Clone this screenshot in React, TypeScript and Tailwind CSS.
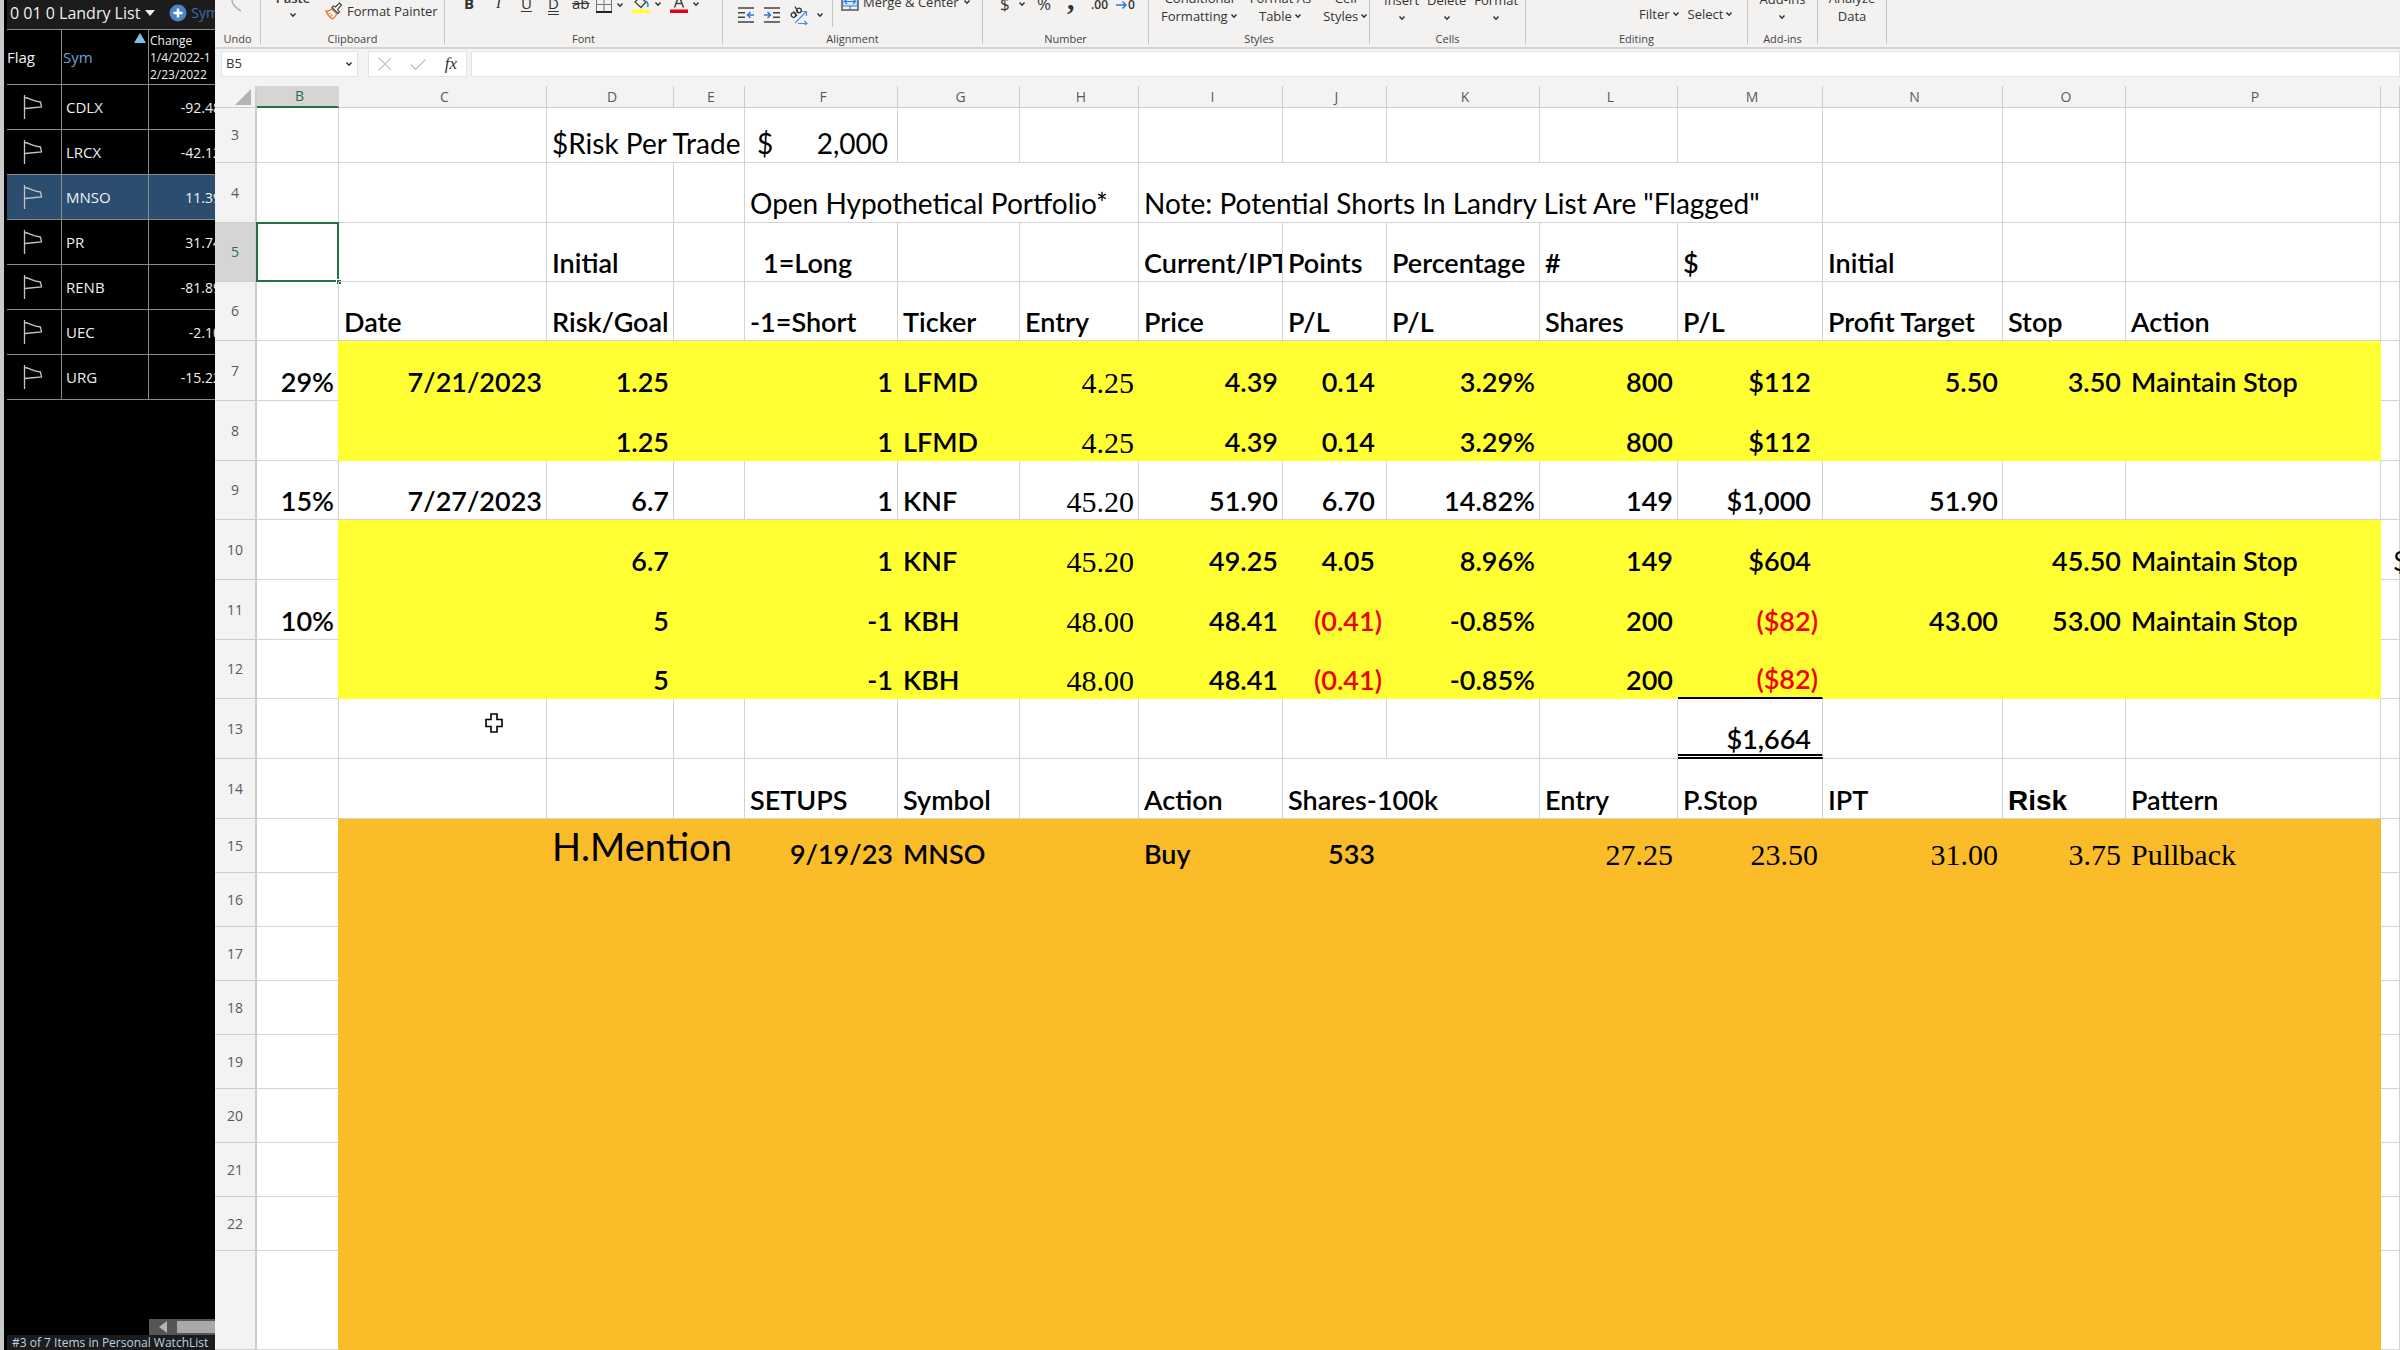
import React from 'react';

type Cell = {
    text: string;
    align?: 'left' | 'right';
    span?: number;
    style?: string;
};

type SheetRow = {
    n: string;
    height: string;
    fill?: 'yellow' | 'orange';
    cells: Record<string, Cell>;
};

const COLUMNS = [
    { id: 'B', width: 'w-[82px]' },
    { id: 'C', width: 'w-[208px]' },
    { id: 'D', width: 'w-[127px]' },
    { id: 'E', width: 'w-[71px]' },
    { id: 'F', width: 'w-[153px]' },
    { id: 'G', width: 'w-[122px]' },
    { id: 'H', width: 'w-[119px]' },
    { id: 'I', width: 'w-[144px]' },
    { id: 'J', width: 'w-[104px]' },
    { id: 'K', width: 'w-[153px]' },
    { id: 'L', width: 'w-[138px]' },
    { id: 'M', width: 'w-[145px]' },
    { id: 'N', width: 'w-[180px]' },
    { id: 'O', width: 'w-[123px]' },
    { id: 'P', width: 'w-[255px]' },
    { id: 'Q', width: '' },
];

const SERIF = "font-['Liberation_Serif',serif] text-[30px] leading-[32px] font-normal";
const PLAIN = 'font-normal text-[28px] leading-[36px]';
const RED = 'text-[#f00000]';

const l = (text: string, style = '', span = 1): Cell => ({ text, style, span, align: 'left' });
const r = (text: string, style = ''): Cell => ({ text, style, align: 'right' });
// accounting formats keep room for a closing bracket
const acc = (text: string): Cell => r(text, 'pr-[11px]');

const ROWS: SheetRow[] = [
    { n: '3', height: 'h-[55px]', cells: { D: l('$Risk Per Trade', PLAIN, 2), F: l('$ 2,000', PLAIN) } },
    {
        n: '4', height: 'h-[60px]', cells: {
            F: l('Open Hypothetical Portfolio*', PLAIN, 3),
            I: l('Note: Potential Shorts In Landry List Are "Flagged"', PLAIN, 5),
        },
    },
    {
        n: '5', height: 'h-[59px]', cells: {
            D: l('Initial'), F: l('1=Long', 'pl-[18px]'), I: l('Current/IPT'), J: l('Points'),
            K: l('Percentage'), L: l('#'), M: l('$'), N: l('Initial'),
        },
    },
    {
        n: '6', height: 'h-[59px]', cells: {
            C: l('Date'), D: l('Risk/Goal'), F: l('-1=Short'), G: l('Ticker'), H: l('Entry'), I: l('Price'),
            J: l('P/L'), K: l('P/L'), L: l('Shares'), M: l('P/L'), N: l('Profit Target'), O: l('Stop'), P: l('Action'),
        },
    },
    {
        n: '7', height: 'h-[60px]', fill: 'yellow', cells: {
            B: r('29%'), C: r('7/21/2023'), D: r('1.25'), F: r('1'), G: l('LFMD'), H: r('4.25', SERIF), I: r('4.39'),
            J: acc('0.14'), K: r('3.29%'), L: r('800'), M: acc('$112'), N: r('5.50'), O: r('3.50'), P: l('Maintain Stop'),
        },
    },
    {
        n: '8', height: 'h-[60px]', fill: 'yellow', cells: {
            D: r('1.25'), F: r('1'), G: l('LFMD'), H: r('4.25', SERIF), I: r('4.39'),
            J: acc('0.14'), K: r('3.29%'), L: r('800'), M: acc('$112'),
        },
    },
    {
        n: '9', height: 'h-[59px]', cells: {
            B: r('15%'), C: r('7/27/2023'), D: r('6.7'), F: r('1'), G: l('KNF'), H: r('45.20', SERIF), I: r('51.90'),
            J: acc('6.70'), K: r('14.82%'), L: r('149'), M: acc('$1,000'), N: r('51.90'),
        },
    },
    {
        n: '10', height: 'h-[60px]', fill: 'yellow', cells: {
            D: r('6.7'), F: r('1'), G: l('KNF'), H: r('45.20', SERIF), I: r('49.25'), J: acc('4.05'), K: r('8.96%'),
            L: r('149'), M: acc('$604'), O: r('45.50'), P: l('Maintain Stop'), Q: l('$', 'font-normal pl-3'),
        },
    },
    {
        n: '11', height: 'h-[60px]', fill: 'yellow', cells: {
            B: r('10%'), D: r('5'), F: r('-1'), G: l('KBH'), H: r('48.00', SERIF), I: r('48.41'), J: r('(0.41)', RED),
            K: r('-0.85%'), L: r('200'), M: r('($82)', RED), N: r('43.00'), O: r('53.00'), P: l('Maintain Stop'),
        },
    },
    {
        n: '12', height: 'h-[59px]', fill: 'yellow', cells: {
            D: r('5'), F: r('-1'), G: l('KBH'), H: r('48.00', SERIF), I: r('48.41'), J: r('(0.41)', RED),
            K: r('-0.85%'), L: r('200'), M: r('($82)', RED),
        },
    },
    { n: '13', height: 'h-[60px]', cells: { M: r('$1,664', 'pr-[11px] leading-[30px]') } },
    {
        n: '14', height: 'h-[60px]', cells: {
            F: l('SETUPS'), G: l('Symbol'), I: l('Action'), J: l('Shares-100k', '', 2), L: l('Entry'), M: l('P.Stop'),
            N: l('IPT'), O: l('Risk', "font-['Liberation_Sans',sans-serif] text-[28px] leading-[32px]"), P: l('Pattern'),
        },
    },
    {
        n: '15', height: 'h-[54px]', fill: 'orange', cells: {
            D: l('H.Mention', 'font-normal text-[38px] leading-[50px]', 2), F: r('9/19/23'), G: l('MNSO'), I: l('Buy'),
            J: acc('533'), L: r('27.25', SERIF), M: r('23.50', SERIF), N: r('31.00', SERIF), O: r('3.75', SERIF),
            P: l('Pullback', SERIF),
        },
    },
    ...['16', '17', '18', '19', '20', '21', '22'].map(
        (n): SheetRow => ({ n, height: 'h-[54px]', fill: 'orange', cells: {} }),
    ),
    { n: '', height: '', fill: 'orange', cells: {} },
];

const WATCHLIST = [
    { sym: 'CDLX', change: '-92.48' },
    { sym: 'LRCX', change: '-42.12' },
    { sym: 'MNSO', change: '11.39' },
    { sym: 'PR', change: '31.74' },
    { sym: 'RENB', change: '-81.89' },
    { sym: 'UEC', change: '-2.10' },
    { sym: 'URG', change: '-15.22' },
];

/* ---------- icons ---------- */

const Chevron = ({ className = '' }: { className?: string }) => (
    <svg className={`h-2 w-2 shrink-0 ${className}`} viewBox="0 0 8 8" fill="none" stroke="#333" strokeWidth="1.5"><path d="M1.5 2.5 4 5.2 6.5 2.5" /></svg>
);

const FlagIcon = () => (
    <svg className="ml-4 h-6 w-5" viewBox="0 0 20 24" fill="none" stroke="#c4c4c4" strokeWidth="1.3"><path d="M1.5 0V24M1.5 2.500C7 3 9 6 17.500 7L18.500 12 2 13.500" /></svg>
);

const BrushIcon = () => (
    <svg className="h-[18px] w-[18px]" viewBox="0 0 18 18" fill="none">
        <path d="M1 9c2 .6 4-.4 5.500-2l5.500 5c-1.500 1.500-2.500 3.500-4.500 5C5 15.500 2.500 13 1 9Z" fill="#fff" stroke="#e07b39" strokeWidth="1.400" />
        <path d="m3.500 12 2-1M5.500 14.500l2-2" stroke="#e07b39" strokeWidth="1.200" />
        <path d="m7 5.500 6 6 1.500-1.500-2-2.500 4-4.500L14.500 1l-4 4L8.500 4Z" fill="#fff" stroke="#444" strokeWidth="1.200" />
    </svg>
);

const BordersIcon = () => (
    <svg className="h-4 w-4" viewBox="0 0 16 16" fill="none" stroke="#777"><path d="M.5 0V15M15.500 0V15M8 0V15M0 7.500H16" /><path d="M0 15H16" stroke="#222" strokeWidth="2" /></svg>
);

const BucketIcon = () => (
    <svg className="h-[18px] w-[18px]" viewBox="0 0 18 18" fill="none"><path d="M3 7 8 2l6 5-5 5.500L3 7Z" stroke="#444" strokeWidth="1.300" /><path d="M14 6c2 2 2.500 4 1.500 6" stroke="#2b7cd3" strokeWidth="1.500" /><path d="M0 14.500H18V18H0Z" fill="#ffff2e" /></svg>
);

const FontColorIcon = () => (
    <svg className="h-[18px] w-[18px]" viewBox="0 0 18 18" fill="none"><path d="m4.500 12.500 4.500-12 4.500 12M6 8.500h6" stroke="#444" strokeWidth="1.500" /><path d="M0 14.500H18V18H0Z" fill="#e3001b" /></svg>
);

const IndentIcon = ({ right = false }: { right?: boolean }) => (
    <svg className="h-4 w-4" viewBox="0 0 16 16" fill="none">
        <path d="M0 1H16M0 15H16" stroke="#444" strokeWidth="1.400" />
        {right
            ? <><path d="M9 5.700H16M9 10.300H16" stroke="#444" strokeWidth="1.400" /><path d="M0 8H6M3.500 5 6.500 8 3.500 11" stroke="#2b7cd3" strokeWidth="1.500" /></>
            : <><path d="M0 5.700H7M0 10.300H7" stroke="#444" strokeWidth="1.400" /><path d="M16 8H10M12.500 5 9.500 8 12.500 11" stroke="#2b7cd3" strokeWidth="1.500" /></>}
    </svg>
);

const OrientationIcon = () => (
    <svg className="h-5 w-[18px]" viewBox="0 0 18 20" fill="none">
        <circle cx="3.500" cy="10" r="2.300" stroke="#333" strokeWidth="1.300" /><path d="M3.500 6.500 7 11" stroke="#333" strokeWidth="1.300" />
        <circle cx="9" cy="5.500" r="2.300" stroke="#333" strokeWidth="1.300" /><path d="M5 1.500 8 7" stroke="#333" strokeWidth="1.300" />
        <path d="M5 18 16 7M12 6.500H16.500V11M8 18.500H17M14.500 16 17 18.500 14.500 20" stroke="#4a90d9" strokeWidth="1.200" />
    </svg>
);

const MergeIcon = () => (
    <svg className="h-[18px] w-[18px]" viewBox="0 0 18 18" fill="none"><path d="M1 0V17H17V0" stroke="#555" strokeWidth="1.500" /><path d="M1.700 4H16.300V13H1.700Z" fill="#d5e8f8" stroke="#2b7cd3" /><path d="M4 8.500H14M6 6 3.500 8.500 6 11M12 6l2.500 2.500L12 11M9 13v4" stroke="#2b7cd3" strokeWidth="1.200" /></svg>
);

/* ---------- ribbon ---------- */

const Group = ({ label, width, children }: { label: string; width: string; children: React.ReactNode }) => (
    <section className={`flex h-[44px] shrink-0 flex-col border-r border-[#c8c6c4] ${width}`}>
        <div className="flex h-[31px] shrink-0 items-end">{children}</div>
        <h2 className="text-center text-[11px] leading-4 text-[#444]">{label}</h2>
    </section>
);

const StackButton = ({ top, bottom }: { top: string; bottom?: string }) => (
    <button className="flex shrink-0 flex-col items-center leading-[18px]">
        <span>{top}</span>
        <span className="flex h-[18px] items-center gap-0.5">{bottom}<Chevron /></span>
    </button>
);

const Ribbon = () => (
    <div className="flex h-[49px] shrink-0 overflow-hidden border-b-2 border-[#d6d4d3] bg-[#f3f2f1] text-[12px] text-[#333]">
        <Group label="Undo" width="w-[46px]">
            <button aria-label="Undo" className="mb-[19px] ml-4"><svg className="h-4 w-3" viewBox="0 0 12 16" fill="none" stroke="#b0b0b0" strokeWidth="1.500"><path d="M1 4c0 5 4 8 9 11" /></svg></button>
        </Group>
        <Group label="Clipboard" width="w-[184px]">
            <button className="ml-4 flex w-8 flex-col items-center pb-3 text-[13px] leading-[18px]"><span className="font-semibold">Paste</span><Chevron className="mt-1" /></button>
            <button className="mb-[10px] ml-4 flex items-center gap-1 text-[13px] leading-5"><BrushIcon />Format Painter</button>
        </Group>
        <Group label="Font" width="w-[278px]">
            <div className="flex items-end pb-[18px] pl-[19px] text-[15px] leading-5">
                <button className="w-[30px] text-left font-bold">B</button>
                <button className="w-[27px] pl-0.5 text-left font-['Liberation_Serif',serif] italic">I</button>
                <button className="w-[27px] text-left underline underline-offset-2">U</button>
                <button className="w-[24px] text-left underline decoration-double underline-offset-2">D</button>
                <button className="w-[24px] text-left line-through">ab</button>
                <button aria-label="Borders" className="flex items-center gap-1"><BordersIcon /><Chevron /></button>
                <button aria-label="Fill colour" className="ml-2 flex items-center gap-1"><BucketIcon /><Chevron /></button>
                <button aria-label="Font colour" className="ml-2 flex items-center gap-1"><FontColorIcon /><Chevron /></button>
            </div>
        </Group>
        <Group label="Alignment" width="w-[260px]">
            <div className="flex shrink-0 items-center gap-[10px] pb-[6px] pl-[15px]">
                <button aria-label="Decrease indent"><IndentIcon /></button>
                <button aria-label="Increase indent"><IndentIcon right /></button>
                <button aria-label="Orientation" className="flex items-center gap-1"><OrientationIcon /><Chevron className="ml-1" /></button>
            </div>
            <div className="ml-2 h-[27px] self-start border-l border-[#c8c6c4]" />
            <button className="mb-[19px] ml-2 flex shrink-0 items-center gap-1 text-[13px] leading-5"><MergeIcon />Merge &amp; Center<Chevron /></button>
        </Group>
        <Group label="Number" width="w-[166px]">
            <div className="flex items-end pb-[17px] pl-[17px] text-[17px] leading-5">
                <button className="flex w-[37px] items-center gap-2">$<Chevron /></button>
                <button className="w-[30px] text-left">%</button>
                <button className="w-[24px] text-left font-['Liberation_Serif',serif] text-[30px] leading-[30px] font-bold">,</button>
                <button className="w-[25px] text-left text-[12px] leading-[18px] font-semibold">.00</button>
                <button className="flex items-center text-[12px] leading-[18px] font-semibold"><svg className="h-3 w-3" viewBox="0 0 12 12" fill="none" stroke="#2b7cd3" strokeWidth="1.500"><path d="M0 6H10M6.500 2.500 10 6 6.500 9.500" /></svg>0</button>
            </div>
        </Group>
        <Group label="Styles" width="w-[221px]">
            <div className="flex gap-3 pb-[6px] pl-3 text-[13px]">
                <StackButton top="Conditional" bottom="Formatting" />
                <StackButton top="Format As" bottom="Table" />
                <StackButton top="Cell" bottom="Styles" />
            </div>
        </Group>
        <Group label="Cells" width="w-[156px]">
            <div className="flex gap-2 pb-1 pl-[14px] text-[13px]">
                <StackButton top="Insert" />
                <StackButton top="Delete" />
                <StackButton top="Format" />
            </div>
        </Group>
        <Group label="Editing" width="w-[222px]">
            <div className="flex gap-2 pb-2 pl-[113px] text-[13px] leading-[18px]">
                <button className="flex items-center gap-0.5">Filter<Chevron /></button>
                <button className="flex items-center gap-0.5">Select<Chevron /></button>
            </div>
        </Group>
        <Group label="Add-ins" width="w-[70px]">
            <div className="flex w-full justify-center pb-[5px] text-[13px]"><StackButton top="Add-ins" /></div>
        </Group>
        <Group label="" width="w-[69px]">
            <button className="w-full pb-[6px] text-center text-[13px] leading-[18px]">Analyze<br />Data</button>
        </Group>
    </div>
);

const FormulaBar = () => (
    <div className="flex h-[37px] shrink-0 items-start gap-1 bg-[#f3f3f3] pt-[2px] pl-[6px]">
        <div className="mr-[6px] flex h-[26px] w-[137px] items-center border border-[#e3e3e3] bg-white pr-1 pl-1">
            <input aria-label="Name box" defaultValue="B5" className="w-full min-w-0 text-[13px] text-[#333] outline-none" />
            <button aria-label="Open name box"><Chevron /></button>
        </div>
        <div className="flex h-[26px] w-[99px] items-center justify-between border border-[#e3e3e3] bg-white px-[9px]">
            <button aria-label="Cancel"><svg className="h-[14px] w-[14px]" viewBox="0 0 16 16" stroke="#bdbdbd" strokeWidth="1.300"><path d="M1 1 15 15M15 1 1 15" /></svg></button>
            <button aria-label="Enter"><svg className="h-[13px] w-5" viewBox="0 0 20 16" fill="none" stroke="#bdbdbd" strokeWidth="1.600"><path d="M1 8 7 14 19 2" /></svg></button>
            <button className="font-['Liberation_Serif',serif] text-[17px] leading-5 text-[#333] italic">fx</button>
        </div>
        <input aria-label="Formula" className="h-[26px] min-w-0 flex-1 border border-[#e3e3e3] bg-white outline-none" />
    </div>
);

/* ---------- sheet ---------- */

const Sheet = () => {
    const renderCells = (row: SheetRow) => {
        const out: React.ReactNode[] = [];
        for (let i = 0; i < COLUMNS.length; i++) {
            const id = COLUMNS[i].id;
            const cell = row.cells[id];
            const filled = row.fill && id !== 'B' && id !== 'Q';
            const next = row.fill && id === 'B';
            const colour = filled
                ? row.fill === 'yellow' ? 'bg-[#ffff33] border-[#ffff33]' : 'bg-[#fbbc29] border-[#fbbc29]'
                : next
                    ? row.fill === 'yellow' ? 'border-b-[#d4d4d4] border-r-[#ffff33]' : 'border-b-[#d4d4d4] border-r-[#fbbc29]'
                    : 'border-[#d4d4d4]';
            const edge =
                id === 'M' && row.n === '12' ? 'border-b-2 border-b-black'
                    : id === 'M' && row.n === '13' ? 'border-b-[5px] [border-bottom-style:double] border-b-black'
                        : 'border-b';
            const pad = cell?.style?.includes('pl-') ? 'pr-1' : cell?.style?.includes('pr-') ? 'pl-[5px]' : 'pl-[5px] pr-1';
            // long labels run up to the grid line before they are cut
            const clip = id === 'I' && row.n === '5' ? '-mr-1 overflow-hidden' : '';
            out.push(
                <td
                    key={id}
                    colSpan={cell?.span ?? 1}
                    className={`relative border-r align-bottom whitespace-nowrap ${row.n === '13' ? 'pb-0' : 'pb-px'} ${edge} ${colour} ${pad} ${cell?.align === 'right' ? 'text-right' : 'text-left'} ${cell?.style ?? ''}`}
                >
                    {row.n === '3' && id === 'F'
                        ? <div className="flex justify-between pr-[5px] pl-[7px]"><span>$</span><span>2,000</span></div>
                        : cell && <div className={clip}>{cell.text}</div>}
                    {row.n === '5' && id === 'B' && (
                        <div className="absolute -inset-px border-2 border-[#217346]">
                            <span className="absolute -right-1 -bottom-1 h-[5px] w-[5px] border-t border-l border-white bg-[#217346]" />
                        </div>
                    )}
                    {row.n === '13' && id === 'C' && (
                        <svg className="absolute top-[14px] left-[146px] h-5 w-[18px]" viewBox="0 0 18 20" fill="#fff" stroke="#000" strokeWidth="1.600"><path d="M6 1H12V6.500H17V13.500H12V19H6V13.500H1V6.500H6Z" /></svg>
                    )}
                </td>,
            );
            i += (cell?.span ?? 1) - 1;
        }
        return out;
    };

    return (
        <table className="h-full w-full table-fixed border-separate border-spacing-0 bg-white font-[Lato,'Open_Sans',sans-serif] text-[27px] leading-[34px] font-semibold text-black">
            <colgroup>
                <col className="w-[42px]" />
                {COLUMNS.map(c => <col key={c.id} className={c.width} />)}
            </colgroup>
            <thead className="font-['Open_Sans',sans-serif] text-[14px] leading-5 font-normal text-[#5a5a5a]">
                <tr className="h-[21px]">
                    <th className="h-[21px] border-r-2 border-b border-[#cdcdcd] bg-[#f3f3f3] p-0">
                        <svg className="mr-1 ml-auto h-4 w-4" viewBox="0 0 16 16" fill="#b4b4b4"><path d="M16 0V16H0Z" /></svg>
                    </th>
                    {COLUMNS.map(c => (
                        <th
                            key={c.id}
                            scope="col"
                            className={`h-[21px] p-0 pl-1 font-normal ${c.id === 'B'
                                ? 'border-r border-b-2 border-r-[#d6d4d4] border-b-[#217346] bg-[#d6d4d4] text-[#217346]'
                                : 'border-r border-b border-[#cdcdcd] bg-[#f3f3f3]'}`}
                        >
                            {c.id === 'Q' ? '' : c.id}
                        </th>
                    ))}
                </tr>
            </thead>
            <tbody>
                {ROWS.map((row, i) => (
                    <tr key={i} className={row.height}>
                        <th
                            scope="row"
                            className={`border-r-2 border-b border-[#cdcdcd] p-0 font-['Open_Sans',sans-serif] text-[14px] leading-5 font-normal ${row.n === '5' ? 'bg-[#d6d4d4] text-[#217346]' : 'bg-[#f3f3f3] text-[#5a5a5a]'}`}
                        >
                            {row.n}
                        </th>
                        {renderCells(row)}
                    </tr>
                ))}
            </tbody>
        </table>
    );
};

/* ---------- watch list ---------- */

const WatchList = () => (
    <aside className="flex w-[215px] shrink-0 flex-col overflow-hidden border-l-4 border-[#c9cbcb] bg-black pl-[3px] font-['Open_Sans',sans-serif] text-[15px] text-[#f0f0f0]">
        <div className="flex h-[29px] shrink-0 items-center bg-[#1c1c1c] pb-1 pl-[3px] whitespace-nowrap">
            <button className="flex items-center gap-[5px] text-[16px]">
                0 01 0 Landry List
                <svg className="h-[6px] w-[10px]" viewBox="0 0 10 6" fill="#eee"><path d="M0 0H10L5 6Z" /></svg>
            </button>
            <button className="ml-[14px] flex items-center gap-1 text-[14px] text-[#3f6da5]">
                <svg className="h-[18px] w-[18px]" viewBox="0 0 18 18"><circle cx="9" cy="9" r="8.500" fill="#4d83c9" /><path d="M9 4.500V13.500M4.500 9H13.500" stroke="#fff" strokeWidth="2.400" /></svg>
                Sym
            </button>
        </div>
        <table className="w-[220px] shrink-0 table-fixed border-separate border-spacing-0 border-t border-[#8a8a8a]">
            <colgroup>
                <col className="w-[55px]" />
                <col className="w-[87px]" />
                <col />
            </colgroup>
            <thead>
                <tr className="h-[55px]">
                    <th className="border-r border-b border-[#8a8a8a] p-0 text-left font-normal">Flag</th>
                    <th className="relative border-r border-b border-[#8a8a8a] p-0 pl-px text-left font-normal text-[#6fa3d8]">
                        Sym
                        <svg className="absolute top-[3px] right-[2px] h-[10px] w-3" viewBox="0 0 12 10" fill="#7fbfe8"><path d="M6 0 12 10H0Z" /></svg>
                    </th>
                    <th className="border-b border-[#8a8a8a] p-0 pl-px text-left text-[12px] leading-[17px] font-normal whitespace-nowrap">Change<br />1/4/2022-1<br />2/23/2022</th>
                </tr>
            </thead>
            <tbody>
                {WATCHLIST.map(item => (
                    <tr key={item.sym} className={`h-[45px] ${item.sym === 'MNSO' ? 'bg-[#2b4e70]' : ''}`}>
                        <td className="border-r border-b border-[#8a8a8a] p-0"><FlagIcon /></td>
                        <td className="border-r border-b border-[#8a8a8a] p-0 pl-1">{item.sym}</td>
                        <td className="border-b border-[#8a8a8a] p-0 pr-[6px] text-right text-[14px]">{item.change}</td>
                    </tr>
                ))}
            </tbody>
        </table>
        <div className="mt-auto ml-[142px] flex h-4 shrink-0 items-center gap-[10px] bg-[#555] pl-[10px]">
            <svg className="h-3 w-2 shrink-0" viewBox="0 0 8 12" fill="#b5b5b5"><path d="M8 0V12L0 6Z" /></svg>
            <div className="h-3 flex-1 bg-[#a9a9a9]" />
        </div>
        <div className="h-[15px] shrink-0 bg-[#1c1c1c] pl-[5px] text-[12px] leading-[15px] whitespace-nowrap text-[#b9d3e4]">#3 of 7 Items in Personal WatchList</div>
    </aside>
);

export default function App() {
    return (
        <div className="flex h-screen overflow-hidden bg-white">
            <WatchList />
            <main className="flex min-w-0 flex-1 flex-col overflow-hidden font-['Open_Sans',sans-serif]">
                <Ribbon />
                <FormulaBar />
                <div className="min-h-0 flex-1"><Sheet /></div>
            </main>
        </div>
    );
}
